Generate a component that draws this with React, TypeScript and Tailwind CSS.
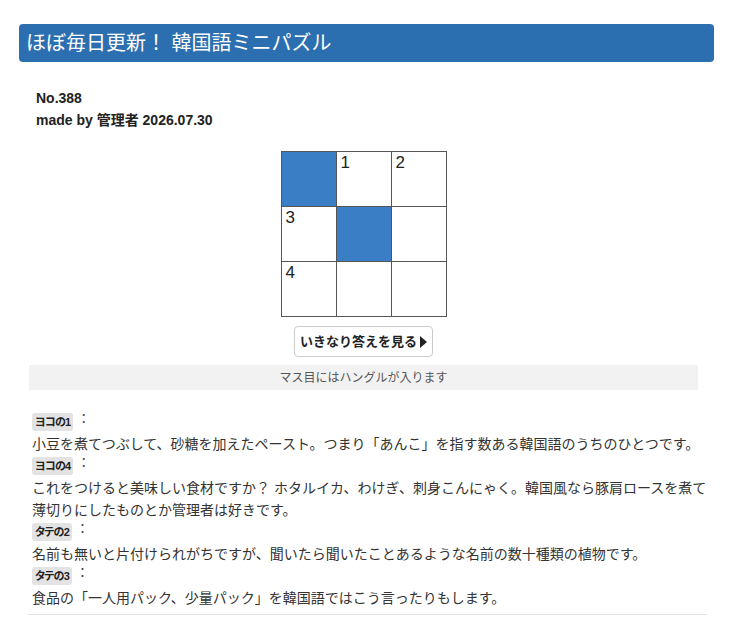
import React from "react";

const font = { fontFamily: '"Liberation Sans", "Noto Sans CJK JP", sans-serif' };

function Cell({ black, num }: { black?: boolean; num?: string }) {
  return (
    <div
      className={
        "relative w-[56px] h-[56px] border border-[#555555] -ml-px first:ml-0 " +
        (black ? "bg-[#3a7fc5]" : "bg-white")
      }
    >
      {num && (
        <span className="absolute left-[4px] top-[1px] text-[17px] leading-[20px] text-[#222]">
          {num}
        </span>
      )}
    </div>
  );
}

function Label({ children }: { children: React.ReactNode }) {
  return (
    <div className="h-[22px] flex items-center">
      <span className="inline-flex items-center h-[18px] px-[3px] rounded-[3px] bg-[#e3e3e3] text-[11px] font-bold text-[#222] leading-none tracking-[-0.8px] [font-feature-settings:'palt']">
        {children}
      </span>
      <span className="ml-[4px] text-[13px] text-[#444] -mt-[6px]">：</span>
    </div>
  );
}

function Line({ children }: { children: React.ReactNode }) {
  return <div className="h-[22px] leading-[22px] text-[14px] text-[#333] whitespace-nowrap">{children}</div>;
}

export default function App() {
  return (
    <div className="w-[734px] h-[637px] bg-white overflow-hidden" style={font}>
      <div className="pt-[24px] pl-[19px]">
        <div className="w-[695px] h-[38px] bg-[#2c6fb0] rounded-[4px] flex items-center pl-[7px]">
          <span className="text-white text-[20px] leading-none">ほぼ毎日更新！ 韓国語ミニパズル</span>
        </div>
      </div>

      <div className="pl-[36px] pt-[25px] text-[14px] font-bold text-[#222] leading-[22px]">
        <div>No.388</div>
        <div>made by 管理者 2026.07.30</div>
      </div>

      <div className="ml-[29px] w-[678px]">
        <div className="w-[669px] flex flex-col items-center">
          <div className="mt-[20px] flex flex-col">
            <div className="flex">
              <Cell black />
              <Cell num="1" />
              <Cell num="2" />
            </div>
            <div className="flex -mt-px">
              <Cell num="3" />
              <Cell black />
              <Cell />
            </div>
            <div className="flex -mt-px">
              <Cell num="4" />
              <Cell />
              <Cell />
            </div>
          </div>
          <button className="mt-[9px] h-[31px] w-[139px] border border-[#cccccc] rounded-[4px] bg-white flex items-center justify-center text-[13px] font-bold text-[#222]">
            いきなり答えを見る
            <span className="ml-[3px] w-0 h-0 border-y-[6px] border-y-transparent border-l-[7px] border-l-[#222]"></span>
          </button>
        </div>
        <div className="mt-[8px] w-[669px] h-[25px] bg-[#f2f2f2] flex items-center justify-center text-[12px] text-[#555]">
          マス目にはハングルが入ります
        </div>

        <div className="mt-[21px] pl-[3px] w-[673px]">
          <Label>ヨコの1</Label>
          <Line>小豆を煮てつぶして、砂糖を加えたペースト。つまり「あんこ」を指す数ある韓国語のうちのひとつです。</Line>
          <Label>ヨコの4</Label>
          <Line>これをつけると美味しい食材ですか？ ホタルイカ、わけぎ、刺身こんにゃく。韓国風なら豚肩ロースを煮て</Line>
          <Line>薄切りにしたものとか管理者は好きです。</Line>
          <Label>タテの2</Label>
          <Line>名前も無いと片付けられがちですが、聞いたら聞いたことあるような名前の数十種類の植物です。</Line>
          <Label>タテの3</Label>
          <Line>食品の「一人用パック、少量パック」を韓国語ではこう言ったりもします。</Line>
        </div>
        <div className="mt-[5px] -ml-px w-[679px] h-px bg-[#e5e5e5]"></div>
      </div>
    </div>
  );
}
